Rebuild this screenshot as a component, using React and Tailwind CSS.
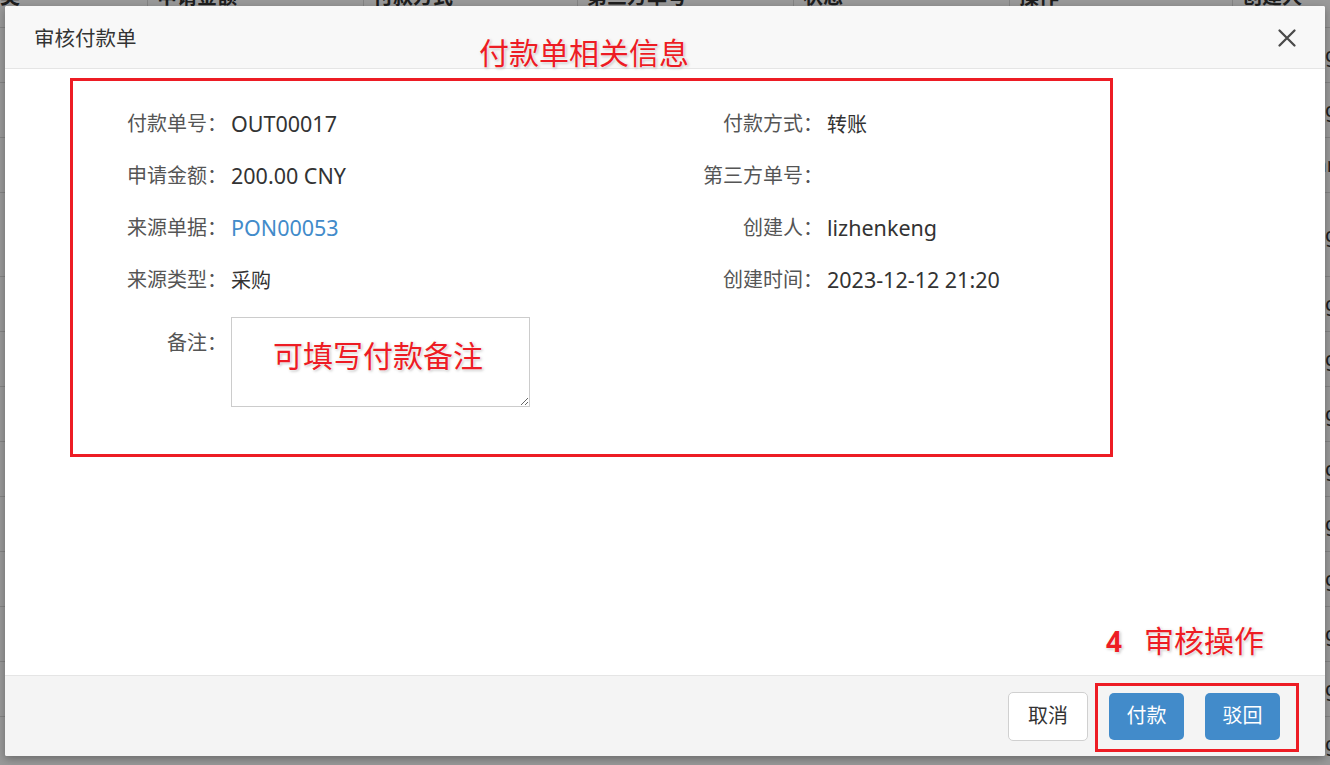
import React from "react";

const cols = "grid grid-cols-[147px_216px_214px_216px_216px_223px_1fr]";

const rows = [
  { h: "h-[55px]", name: "lizhenkeng" },
  { h: "h-[55px]", name: "lizhenkeng" },
  { h: "h-[55px]", name: "lizhenhuan" },
  { h: "h-[84px]", name: "lizhenkeng" },
  { h: "h-[55px]", name: "lizhenkeng" },
  { h: "h-[55px]", name: "lizhenkeng" },
  { h: "h-[55px]", name: "lizhenkeng" },
  { h: "h-[55px]", name: "lizhenkeng" },
  { h: "h-[55px]", name: "lizhenkeng" },
  { h: "h-[55px]", name: "lizhenkeng" },
  { h: "h-[55px]", name: "lizhenkeng" },
  { h: "h-[55px]", name: "lizhenkeng", last: true },
  { h: "h-[55px]", name: "lizhenkeng" },
];

function Background() {
  return (
    <div className="w-[1330px] h-[765px] overflow-hidden bg-white text-[20px] text-[#333]">
      <div className={`${cols} h-[28px] border-b border-[#ddd] font-bold overflow-hidden`}>
        <div className="pl-0"><span className="block -mt-[13px] leading-[20px]">类</span></div>
        {["申请金额", "付款方式", "第三方单号", "状态", "操作", "创建人"].map((t) => (
          <div key={t} className="pl-[9px] border-l border-[#ddd]">
            <span className="block -mt-[13px] leading-[20px] whitespace-nowrap">{t}</span>
          </div>
        ))}
      </div>
      {rows.map((r, i) => (
        <div key={i} className={`${cols} ${r.h} border-b border-[#ddd] items-center`}>
          <div className="pl-[9px]">采购</div>
          <div className="pl-[9px]">200.00</div>
          <div className="pl-[9px]">转账</div>
          <div className="pl-[9px]"></div>
          <div className="pl-[17px]">
            {r.last ? <div className="w-[71px] h-[36px] rounded-[8px] bg-[#8ab26e]" /> : null}
          </div>
          <div className="pl-[16px]">
            {r.last ? <div className="w-[54px] h-[38px] rounded-[5px] border border-[#428bca]" /> : null}
          </div>
          <div className="pl-[3px] whitespace-nowrap">{r.name}</div>
        </div>
      ))}
    </div>
  );
}

function Field({ label, children }) {
  return (
    <div className="flex items-center h-[52px]">
      <div className="w-[196px] text-right text-[20px] text-[#555] whitespace-nowrap">{label}</div>
      <div className="ml-[4px] text-[21.5px] text-[#333] whitespace-nowrap">{children}</div>
    </div>
  );
}

const anno =
  "text-[#ed1c24] text-[30px] leading-[30px] whitespace-nowrap [text-shadow:0_0_2px_#fff,0_0_3px_#fff,1px_1px_3px_rgba(0,0,0,0.35)]";

export default function App() {
  return (
    <div className="relative w-[1330px] h-[765px] overflow-hidden [font-family:'Noto_Sans','Noto_Sans_CJK_SC',sans-serif]">
      <Background />
      <div className="absolute inset-0 bg-black/40 pt-[6px] pl-[5px]">
        <div className="relative w-[1320px] h-[750px] bg-white flex flex-col rounded-[2px] shadow-[0_3px_9px_rgba(0,0,0,0.3)] overflow-hidden">
          {/* header */}
          <div className="h-[63px] bg-[#f8f8f8] border-b border-[#e5e5e5] flex items-center justify-between pl-[29px] pr-[28px] pt-[3px]">
            <div className="text-[20.5px] text-[#333]">审核付款单</div>
            <svg width="20" height="20" viewBox="0 0 20 20" className="mb-[2px]">
              <path d="M2.5 2.5 L17.5 17.5 M17.5 2.5 L2.5 17.5" stroke="#4a4a4a" strokeWidth="2.3" strokeLinecap="round" />
            </svg>
          </div>
          {/* body */}
          <div className="flex-1 pt-[29px] pl-[26px]">
            <div className="grid grid-cols-[596px_596px]">
              <div>
                <Field label="付款单号：">OUT00017</Field>
                <Field label="申请金额：">200.00 CNY</Field>
                <Field label="来源单据："><span className="text-[#428bca]">PON00053</span></Field>
                <Field label="来源类型："><span className="text-[20px]">采购</span></Field>
              </div>
              <div>
                <Field label="付款方式："><span className="text-[20px]">转账</span></Field>
                <Field label="第三方单号："></Field>
                <Field label="创建人：">lizhenkeng</Field>
                <Field label="创建时间：">2023-12-12 21:20</Field>
              </div>
            </div>
            <div className="flex items-start mt-[11px]">
              <div className="w-[196px] h-[52px] flex items-center justify-end text-[20px] text-[#555]">备注：</div>
              <div className="relative ml-[4px]">
                <textarea className="block w-[299px] h-[90px] border border-[#ccc] bg-white outline-none" />
                <div className={`absolute left-[42px] top-[24px] pointer-events-none ${anno}`}>可填写付款备注</div>
              </div>
            </div>
          </div>
          {/* footer */}
          <div className="h-[81px] bg-[#f4f4f4] border-t border-[#e5e5e5] flex items-center justify-end pr-[45px] gap-[21px]">
            <button className="w-[80px] h-[49px] bg-white border border-[#d0d0d0] rounded-[5px] text-[20px] text-[#333]">取消</button>
            <button className="w-[75px] h-[47px] bg-[#428bca] rounded-[5px] text-[20px] text-white">付款</button>
            <button className="w-[75px] h-[47px] bg-[#428bca] rounded-[5px] text-[20px] text-white">驳回</button>
          </div>

          {/* annotations */}
          <div className="absolute left-[65px] top-[72px] w-[1043px] h-[379px] border-[3px] border-[#ed1c24] pointer-events-none" />
          <div className={`absolute left-[474px] top-[32px] ${anno}`}>付款单相关信息</div>
          <div className={`absolute left-[1101px] top-[620px] flex items-center ${anno}`}>
            <span className="font-bold text-[28px]">4</span>
            <span className="ml-[22px]">审核操作</span>
          </div>
          <div className="absolute left-[1090px] top-[677px] w-[204px] h-[69px] border-[3px] border-[#ed1c24] pointer-events-none" />
        </div>
      </div>
    </div>
  );
}
